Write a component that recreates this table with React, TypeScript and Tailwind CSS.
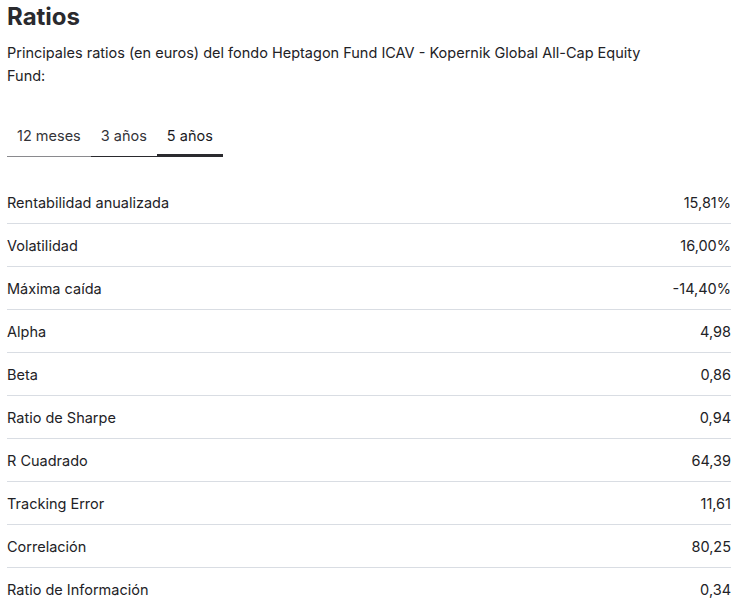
const ratios = [
  { label: 'Rentabilidad anualizada', value: '15,81%' },
  { label: 'Volatilidad', value: '16,00%' },
  { label: 'Máxima caída', value: '-14,40%' },
  { label: 'Alpha', value: '4,98' },
  { label: 'Beta', value: '0,86' },
  { label: 'Ratio de Sharpe', value: '0,94' },
  { label: 'R Cuadrado', value: '64,39' },
  { label: 'Tracking Error', value: '11,61' },
  { label: 'Correlación', value: '80,25' },
  { label: 'Ratio de Información', value: '0,34' },
]

export default function App() {
  return (
    <div className="min-h-screen bg-white pl-[7px] pr-[16px] font-['Inter',sans-serif] text-[#222226]">
      <h1 className="text-[24px] font-bold leading-[34px] text-[#2a2a2e]">Ratios</h1>

      <p className="mt-[7px] max-w-[650px] text-[14.5px] leading-[23px]">
        Principales ratios (en euros) del fondo Heptagon Fund ICAV - Kopernik Global All-Cap Equity Fund:
      </p>

      {/* Tabs */}
      <div className="mt-[27px] flex text-[14.5px] text-[#333338]">
        <button className="h-[43px] px-[10px] shadow-[inset_0_-1px_0_#8a8a8e]">12 meses</button>
        <button className="h-[43px] px-[10px] shadow-[inset_0_-1px_0_#2a2a2e]">3 años</button>
        <button className="h-[43px] px-[10px] text-[#1a1a1e] shadow-[inset_0_-3px_0_#2a2a2e]">5 años</button>
      </div>

      {/* Table */}
      <div className="mt-[24px]">
        {ratios.map((r, i) => (
          <div
            key={r.label}
            className={`flex h-[43px] items-center justify-between pt-[1px] text-[14.5px] ${
              i < ratios.length - 1 ? 'border-b border-[#d9dde3]' : ''
            }`}
          >
            <span>{r.label}</span>
            <span>{r.value}</span>
          </div>
        ))}
      </div>
    </div>
  )
}
